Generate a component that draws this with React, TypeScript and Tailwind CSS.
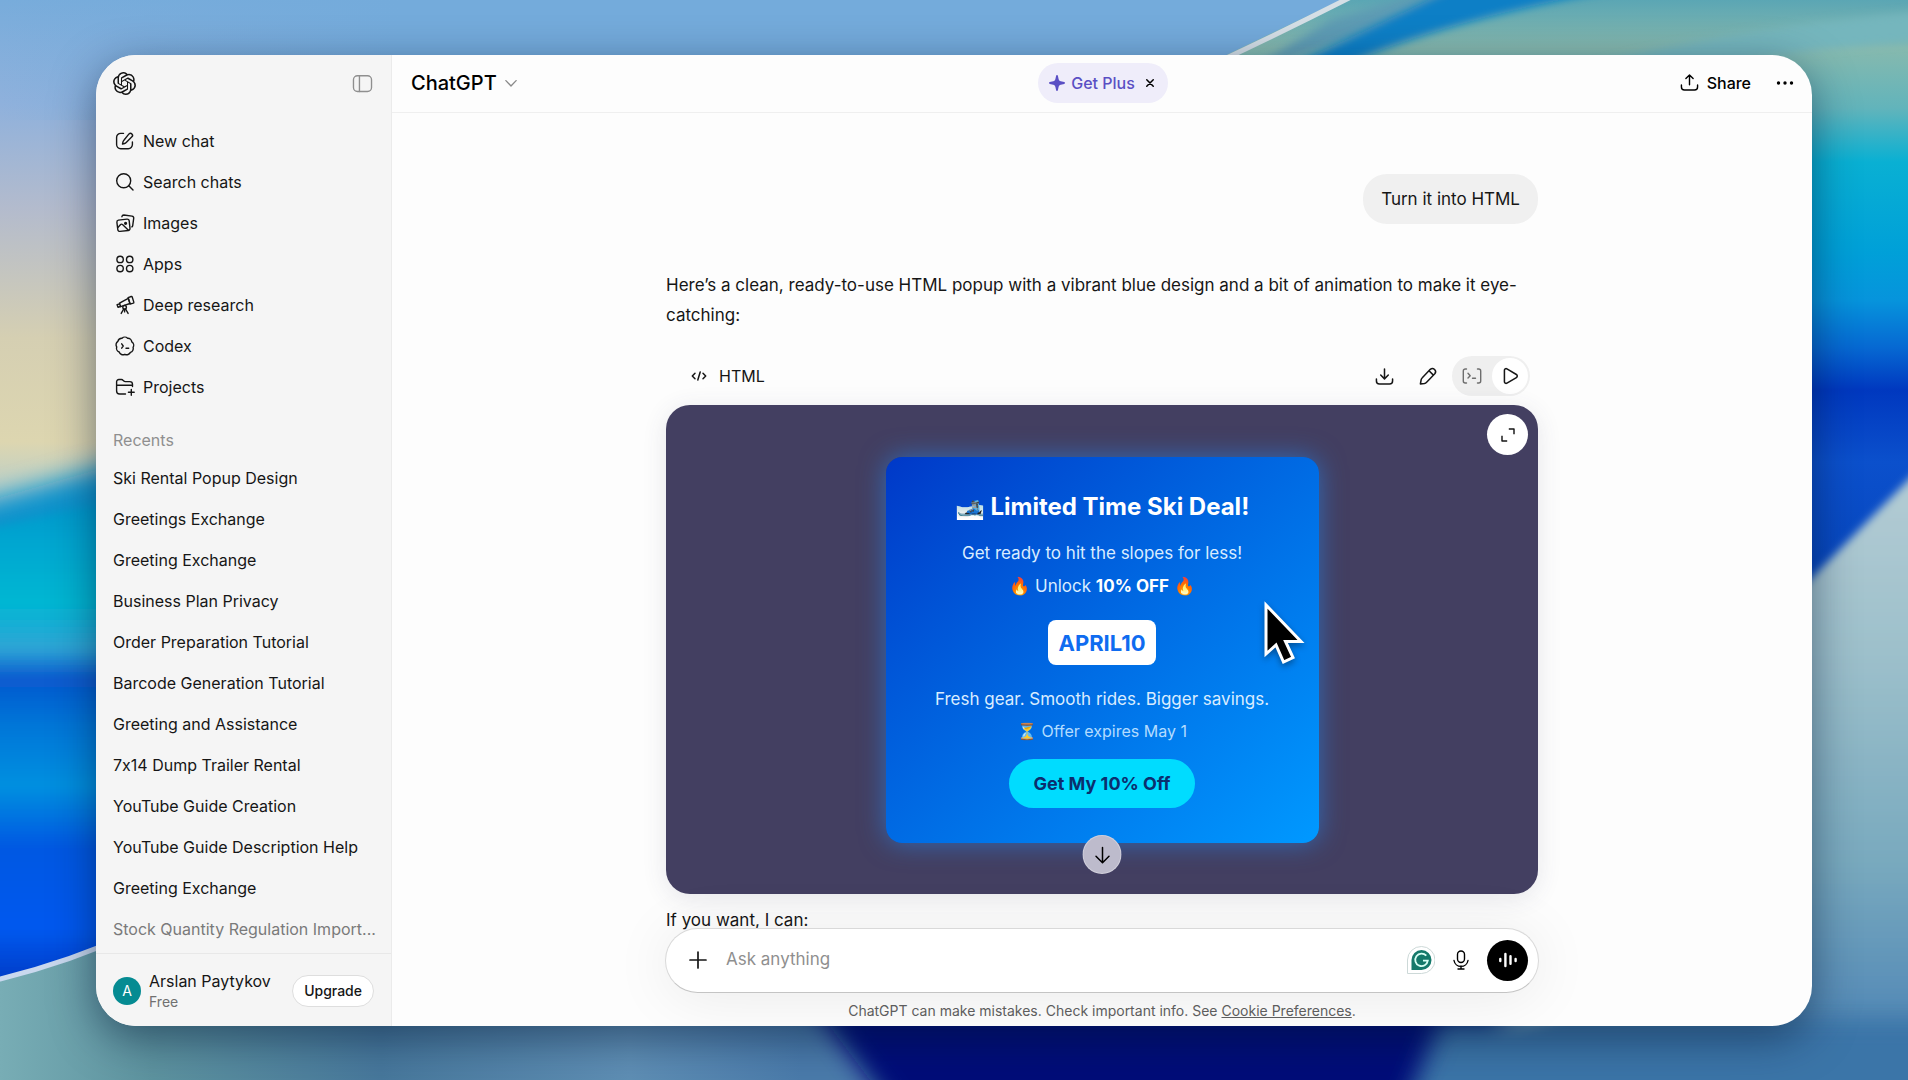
import type { ReactNode } from "react";
import { SiOpenai } from "react-icons/si";

type IconProps = { className?: string; children?: ReactNode; stroke?: string };

function Icon({ className = "size-5", children, stroke = "1.4" }: IconProps) {
  return (
    <svg
      className={className}
      viewBox="0 0 20 20"
      fill="none"
      stroke="currentColor"
      strokeWidth={stroke}
      strokeLinecap="round"
      strokeLinejoin="round"
      aria-hidden="true"
    >
      {children}
    </svg>
  );
}

const navItems: { label: string; icon: ReactNode }[] = [
  {
    label: "New chat",
    icon: (
      <Icon>
        <path d="M8.500 2.400H5.700A4.100 4.100 0 0 0 1.600 6.500v7.100a4.100 4.100 0 0 0 4.100 4.100h7.600a4.100 4.100 0 0 0 4.100-4.100v-2.700" />
        <path d="M14 2.900a2 2 0 0 1 2.900 2.900l-5.700 5.800a3.500 3.500 0 0 1-1.600.9l-2.100.5.500-2.200a3.500 3.500 0 0 1 .9-1.600z" />
      </Icon>
    ),
  },
  {
    label: "Search chats",
    icon: (
      <Icon>
        <circle cx="8.700" cy="8.700" r="7" />
        <path d="m13.800 13.800 4.200 4.200" />
      </Icon>
    ),
  },
  {
    label: "Images",
    icon: (
      <Icon>
        <path d="M3.400 7.100 12 6.100a2 2 0 0 1 2.200 1.800l.8 7.400a2 2 0 0 1-1.800 2.200l-8.200.9a2 2 0 0 1-2.200-1.800l-.9-7.300a2 2 0 0 1 1.500-2.200z" />
        <path d="M6.900 3.700a2 2 0 0 1 2-1.700l8.100 1.100a2 2 0 0 1 1.700 2.200l-1 7.300a2 2 0 0 1-.8 1.300" />
        <path d="m3.100 14.200 2.300-2.500a1.500 1.500 0 0 1 2.100-.1l5.700 5.300" />
        <circle cx="10.600" cy="10.300" r=".9" fill="currentColor" />
      </Icon>
    ),
  },
  {
    label: "Apps",
    icon: (
      <Icon>
        <circle cx="5.100" cy="5.400" r="3.200" />
        <circle cx="14.700" cy="5.400" r="3.200" />
        <circle cx="5.100" cy="14.600" r="3.200" />
        <circle cx="14.700" cy="14.600" r="3.200" />
      </Icon>
    ),
  },
  {
    label: "Deep research",
    icon: (
      <Icon>
        <path d="m13.100 2.600 3.100-1.100a.8.8 0 0 1 1 .5l1.600 5.100a.8.8 0 0 1-.5 1l-3.200 1z" />
        <path d="m13.300 3.300 1.700 5.200-9.400 3.200-1.100-3.500z" />
        <path d="m4.700 8.800-2.600.9.900 2.600 2.400-.8" />
        <circle cx="9.600" cy="12.300" r="1.800" fill="#f5f5f5" />
        <path d="m8.700 14-2.500 4.400M10.600 14l2.500 4.400M9.600 14.300v2.600" />
      </Icon>
    ),
  },
  {
    label: "Codex",
    icon: (
      <Icon>
        <path d="M7 2.300a4 4 0 0 1 5.600-.1 4 4 0 0 1 4.200 3.700 4 4 0 0 1 1.300 5.500 4 4 0 0 1-2.700 5 4 4 0 0 1-5.500 1.900 4 4 0 0 1-5.700-2.300 4 4 0 0 1-2.500-5 4 4 0 0 1 1.200-5.600A4 4 0 0 1 7 2.300z" />
        <path d="m6.700 7.800 1.500 2.200-1.500 2.200M11 12.300h2.700" />
      </Icon>
    ),
  },
  {
    label: "Projects",
    icon: (
      <Icon>
        <path d="M10.500 17H4.600a3 3 0 0 1-3-3V4.700a2.200 2.200 0 0 1 2.200-2.200h2.700c.6 0 1.100.2 1.500.7l.8.8c.4.400.9.600 1.500.600h4.500A2.700 2.700 0 0 1 17.500 7.300v2.200M1.600 8.300h15.900" />
        <path d="M16.300 12.400v5.800M13.400 15.300h5.800" />
      </Icon>
    ),
  },
];

const recents = [
  "Ski Rental Popup Design",
  "Greetings Exchange",
  "Greeting Exchange",
  "Business Plan Privacy",
  "Order Preparation Tutorial",
  "Barcode Generation Tutorial",
  "Greeting and Assistance",
  "7x14 Dump Trailer Rental",
  "YouTube Guide Creation",
  "YouTube Guide Description Help",
  "Greeting Exchange",
  "Stock Quantity Regulation Import...",
];

function Wallpaper() {
  return (
    <svg
      className="absolute inset-0 size-full"
      viewBox="0 0 1908 1080"
      preserveAspectRatio="none"
      aria-hidden="true"
    >
      <defs>
        <linearGradient id="sky" x1="0" y1="0" x2="0" y2="520" gradientUnits="userSpaceOnUse">
          <stop offset="0" stopColor="#78acdb" />
          <stop offset=".2" stopColor="#8fb1dc" />
          <stop offset=".4" stopColor="#b3bbcd" />
          <stop offset=".65" stopColor="#d5cfb2" />
          <stop offset=".85" stopColor="#ddd6b0" />
          <stop offset="1" stopColor="#a5cbd8" />
        </linearGradient>
        <linearGradient id="skyTop" x1="0" y1="0" x2="400" y2="0" gradientUnits="userSpaceOnUse">
          <stop offset="0" stopColor="#74abdb" stopOpacity="0" />
          <stop offset="1" stopColor="#74abdb" />
        </linearGradient>
        <linearGradient id="wave" x1="0" y1="480" x2="0" y2="990" gradientUnits="userSpaceOnUse">
          <stop offset="0" stopColor="#0b8fcb" />
          <stop offset=".12" stopColor="#00a6d0" />
          <stop offset=".24" stopColor="#00b7d3" />
          <stop offset=".33" stopColor="#2fa5d6" />
          <stop offset=".39" stopColor="#0759cf" />
          <stop offset=".48" stopColor="#0576d8" />
          <stop offset=".6" stopColor="#0590e0" />
          <stop offset=".72" stopColor="#0458e2" />
          <stop offset=".88" stopColor="#0059ef" />
          <stop offset="1" stopColor="#0037c0" />
        </linearGradient>
        <linearGradient id="floor" x1="0" y1="0" x2="1908" y2="0" gradientUnits="userSpaceOnUse">
          <stop offset="0" stopColor="#78adb5" />
          <stop offset=".08" stopColor="#5d939f" />
          <stop offset=".2" stopColor="#47789c" />
          <stop offset=".33" stopColor="#5f8fb5" />
          <stop offset=".42" stopColor="#4a7bab" />
        </linearGradient>
        <linearGradient id="right" x1="0" y1="0" x2="0" y2="600" gradientUnits="userSpaceOnUse">
          <stop offset="0" stopColor="#5ba6b4" />
          <stop offset=".08" stopColor="#86b9ae" />
          <stop offset=".18" stopColor="#62b4bb" />
          <stop offset=".27" stopColor="#09b0d3" />
          <stop offset=".42" stopColor="#00a0d8" />
          <stop offset=".5" stopColor="#0694dc" />
          <stop offset=".58" stopColor="#0668d2" />
          <stop offset=".65" stopColor="#0038bf" />
          <stop offset=".77" stopColor="#0b50cc" />
          <stop offset="1" stopColor="#0544bb" />
        </linearGradient>
        <linearGradient id="ice" x1="0" y1="470" x2="0" y2="1080" gradientUnits="userSpaceOnUse">
          <stop offset="0" stopColor="#b4ccd4" />
          <stop offset=".3" stopColor="#9dc0cb" />
          <stop offset=".65" stopColor="#78a9be" />
          <stop offset=".85" stopColor="#5b90b8" />
          <stop offset="1" stopColor="#3e77aa" />
        </linearGradient>
        <filter id="soft4" x="-20%" y="-20%" width="140%" height="140%">
          <feGaussianBlur stdDeviation="4" />
        </filter>
        <filter id="soft12" x="-20%" y="-20%" width="140%" height="140%">
          <feGaussianBlur stdDeviation="12" />
        </filter>
      </defs>
      <rect width="1908" height="1080" fill="url(#sky)" />
      <rect x="0" width="1908" height="120" fill="url(#skyTop)" />
      <path d="M-60 515 200 440V760L-60 760z" fill="#0b93cc" filter="url(#soft12)" />
      <path d="M-60 540 200 480V1010H-60z" fill="url(#wave)" filter="url(#soft4)" />
      <path d="M-40 986 0 979Q70 962 140 930L900 938V1120H-40z" fill="url(#floor)" />
      <path d="M-40 986 0 979Q70 962 140 930" stroke="#c9d8ee" strokeWidth="5" fill="none" />
      <path d="M810 1000H1500V1120H900z" fill="#001179" filter="url(#soft12)" />
      <path d="M1216 60 1351-5H1908V620H1216z" fill="url(#right)" />
      <path d="M1250 70Q1440 10 1640-30L1500-30 1330 20z" fill="#5d9bb4" filter="url(#soft4)" />
      <path d="M1325 75Q1440 15 1700-25H1480Q1400 15 1270 75z" fill="#0a7fc6" filter="url(#soft4)" />
      <path d="M1560 75Q1700 30 1940 10V40Q1760 50 1650 80z" fill="#74b6bd" filter="url(#soft4)" />
      <path d="M1218 62Q1286 30 1351-3" stroke="#d5dfe6" strokeWidth="5" fill="none" />
      <path d="M1780 610 1930 458V1100H1420Q1470 1040 1780 950z" fill="url(#ice)" filter="url(#soft4)" />
      <path d="M1440 1020H1940V1120H1400z" fill="#3a74a8" filter="url(#soft12)" />
    </svg>
  );
}

function Sidebar() {
  return (
    <aside className="flex w-[296px] shrink-0 flex-col border-r border-[#ebebeb] bg-[#f5f5f5]">
      <div className="flex h-[58px] shrink-0 items-center justify-between pr-[18px] pb-0.5 pl-[17px]">
        <a href="#home" aria-label="ChatGPT home">
          <SiOpenai className="size-[23px]" />
        </a>
        <button type="button" aria-label="Close sidebar" className="text-[#8f8f8f]">
          <Icon className="size-[21px]" stroke="1.300">
            <rect x="1.400" y="2.600" width="17.200" height="15" rx="3.800" />
            <path d="M7.100 2.600v15" />
          </Icon>
        </button>
      </div>
      <nav className="mt-[7px] flex flex-col" aria-label="Main">
        {navItems.map((item) => (
          <a key={item.label} href="#nav" className="flex h-[41px] items-center gap-2 pl-[19px]">
            {item.icon}
            {item.label}
          </a>
        ))}
      </nav>
      <h2 className="mt-[15px] flex h-[35px] shrink-0 items-center pl-[17px] text-[#8f8f8f]">Recents</h2>
      <nav className="flex min-h-0 flex-1 flex-col overflow-hidden" aria-label="Recents">
        {recents.map((title, i) => (
          <a
            key={i}
            href="#chat"
            className={`flex h-[41px] shrink-0 items-center pl-[17px] whitespace-nowrap ${
              i === recents.length - 1 ? "text-[#7a7a7a]" : ""
            }`}
          >
            {title}
          </a>
        ))}
      </nav>
      <div className="flex h-[73px] shrink-0 items-center border-t border-[#e8e8e8] pt-0.5 pr-[17px] pl-[17px]">
        <span className="flex size-7 items-center justify-center rounded-full bg-[#058b92] text-sm text-white">
          A
        </span>
        <div className="ml-2 flex-1 whitespace-nowrap">
          <div className="leading-[22px]">Arslan Paytykov</div>
          <div className="text-sm leading-5 text-[#707070]">Free</div>
        </div>
        <button
          type="button"
          className="h-8 rounded-full border border-[#dedede] bg-white px-[11px] text-sm font-medium"
        >
          Upgrade
        </button>
      </div>
    </aside>
  );
}

function Header() {
  return (
    <header className="grid h-[58px] shrink-0 grid-cols-[1fr_auto_1fr] items-center border-b border-[#efefef] pr-[17px] pb-0.5 pl-[19px]">
      <button type="button" className="flex items-center gap-2 justify-self-start text-xl font-medium text-black">
        ChatGPT
        <Icon className="size-3 text-[#8a8a8a]" stroke="2.200">
          <path d="m1.500 6 8.500 9L18.500 6" />
        </Icon>
      </button>
      <div className="flex h-10 items-center rounded-full bg-[#efedfa] px-[11px] text-[#5a4fc4]">
        <button type="button" className="flex items-center gap-1.5 font-medium">
          <svg className="size-4" viewBox="0 0 16 16" fill="currentColor" aria-hidden="true">
            <path d="M8 0c.5 0 .8.300.9.800l.7 3.200c.2 1.200 1 2 2.200 2.300l3.400.8c1 .2 1 1.600 0 1.800l-3.400.8c-1.200.3-2 1.100-2.200 2.300l-.7 3.200c-.2 1-1.600 1-1.800 0L6.400 12c-.2-1.200-1-2-2.200-2.300L.8 8.900c-1-.2-1-1.600 0-1.800l3.400-.8c1.200-.3 2-1.100 2.200-2.300L7.100.8C7.200.3 7.500 0 8 0z" />
          </svg>
          Get Plus
        </button>
        <button type="button" aria-label="Dismiss" className="ml-2 p-0.5 text-black">
          <Icon className="size-2.5" stroke="3">
            <path d="M3.500 3.500 16.500 16.500M16.500 3.500 3.500 16.500" />
          </Icon>
        </button>
      </div>
      <div className="flex items-center gap-6 justify-self-end text-black">
        <button type="button" className="flex items-center gap-2 font-medium">
          <Icon className="size-[19px]" stroke="1.500">
            <path d="M1.500 12.700v2a3.200 3.200 0 0 0 3.200 3.200h10.600a3.200 3.200 0 0 0 3.200-3.200v-2M10 12.300V2M6.200 5.800 10 2l3.800 3.800" />
          </Icon>
          Share
        </button>
        <button type="button" aria-label="More">
          <svg className="size-5" viewBox="0 0 20 20" fill="currentColor" aria-hidden="true">
            <circle cx="3.500" cy="10" r="1.700" />
            <circle cx="10" cy="10" r="1.700" />
            <circle cx="16.500" cy="10" r="1.700" />
          </svg>
        </button>
      </div>
    </header>
  );
}

function CodeToolbar() {
  return (
    <div className="flex h-10 items-center pr-2 pl-[25px]">
      <svg className="mr-3 h-3 w-4" viewBox="0 0 16 12" fill="none" stroke="currentColor" strokeWidth="1.500" strokeLinecap="round" strokeLinejoin="round" aria-hidden="true">
        <path d="M4 3.200 1.300 6 4 8.800M12 3.200 14.700 6 12 8.800M9.200 2 6.800 10" />
      </svg>
      <span className="flex-1">HTML</span>
      <button type="button" aria-label="Download" className="mr-6">
        <Icon className="size-[19px]" stroke="1.600">
          <path d="M1.500 12.700v2a3.200 3.200 0 0 0 3.200 3.200h10.600a3.200 3.200 0 0 0 3.200-3.200v-2M10 2v10.200M6 8.500l4 4 4-4" />
        </Icon>
      </button>
      <button type="button" aria-label="Edit" className="mr-3.5">
        <Icon stroke="1.500">
          <path d="M12.300 3.300a3.200 3.200 0 0 1 4.500 4.500l-8.200 8.400a4.300 4.300 0 0 1-2.200 1.200l-4 .6.700-4a4.300 4.300 0 0 1 1.200-2.300zM11 4.700l4.400 4.400" />
        </Icon>
      </button>
      <div className="flex h-10 w-[78px] items-center justify-between rounded-full bg-[#efefef] pr-0.5 pl-2.5">
        <button type="button" aria-label="Show code" className="text-[#6e6e6e]">
          <Icon>
            <path d="M4.500 3H3.300a2 2 0 0 0-2 2v10a2 2 0 0 0 2 2h1.200M15.500 3h1.200a2 2 0 0 1 2 2v10a2 2 0 0 1-2 2h-1.200M6 7.300 8.200 9.800 6 12M10.500 12.300h3" />
          </Icon>
        </button>
        <button type="button" aria-label="Run preview" className="flex size-9 items-center justify-center rounded-full bg-white">
          <Icon className="size-[18px]" stroke="1.700">
            <path d="M3.800 3.700c0-1.500 1.500-2.300 2.800-1.600l10.500 6.200c1.300.800 1.300 2.600 0 3.400L6.600 17.900c-1.300.7-2.800-.1-2.800-1.600z" />
          </Icon>
        </button>
      </div>
    </div>
  );
}

function Preview() {
  return (
    <section className="relative mt-[9px] flex h-[489px] items-start justify-center rounded-3xl bg-[#433f61] pt-[52px] shadow-[0_4px_24px_rgba(67,63,97,0.12)]">
      <button
        type="button"
        aria-label="Expand"
        className="absolute top-[9px] right-2.5 flex size-[41px] items-center justify-center rounded-full bg-white"
      >
        <Icon className="size-4" stroke="1.800">
          <path d="M11 2.500h6.500V9M2.500 11v6.500H9" strokeLinecap="butt" />
        </Icon>
      </button>
      <div className="flex h-[386px] w-[433px] flex-col items-center rounded-2xl bg-linear-to-br from-[#0038c8] to-[#0099ff] pt-8 text-[17px] text-[#d9ecff] shadow-[0_0_26px_rgba(40,130,230,0.65)]">
        <h3 className="flex h-9 items-center text-2xl font-bold text-white">🎿 Limited Time Ski Deal!</h3>
        <p className="mt-3 flex h-8 items-center">Get ready to hit the slopes for less!</p>
        <p className="flex h-[34px] items-center">
          <span>
            🔥 Unlock <strong className="text-white">10% OFF</strong> 🔥
          </span>
        </p>
        <div className="mt-[17px] flex h-[45px] items-center rounded-lg bg-white px-2.5 text-[22px] font-bold text-[#0f6cf0]">
          APRIL10
        </div>
        <p className="mt-[18px] flex h-8 items-center">Fresh gear. Smooth rides. Bigger savings.</p>
        <p className="flex h-8 items-center text-base text-[#b3dcff]">⏳ Offer expires May 1</p>
        <button type="button" className="mt-3 h-[49px] rounded-full bg-[#00dcff] px-6 text-lg font-bold text-[#0b2f6e]">
          Get My 10% Off
        </button>
      </div>
      <svg
        className="absolute top-[195px] left-[596px] h-[70px] w-[44px] drop-shadow-[0_3px_3px_rgba(0,0,0,0.35)]"
        viewBox="0 0 44 70"
        aria-hidden="true"
      >
        <path d="M4 5v49L14 45l7.500 17 9.500-4.500L23.500 41.500H39z" fill="#000" stroke="#fff" strokeWidth="3" />
      </svg>
    </section>
  );
}

function Composer() {
  return (
    <footer className="relative z-10 px-6">
      <button
        type="button"
        aria-label="Scroll to bottom"
        className="absolute -top-[93px] left-1/2 flex size-[39px] -translate-x-1/2 items-center justify-center rounded-full border border-white/30 bg-[#bdbbcc] text-black"
      >
        <Icon stroke="1.500">
          <path d="M10 2.500v15M3.500 11.200l6.500 6.500 6.500-6.500" />
        </Icon>
      </button>
      <form className="mx-auto flex h-[65px] max-w-[874px] items-center rounded-full border border-[#d9d9d9] border-b-[#c4c4c4] bg-white pr-2.5 pb-px pl-[22px] shadow-[0_4px_60px_rgba(0,0,0,0.08)]">
        <button type="button" aria-label="Add files">
          <Icon stroke="1.700">
            <path d="M10 2v16M2 10h16" />
          </Icon>
        </button>
        <input
          type="text"
          aria-label="Message"
          placeholder="Ask anything"
          className="ml-[18px] min-w-0 flex-1 bg-transparent text-[17px] outline-none placeholder:text-[#8f8f8f]"
        />
        <button type="button" aria-label="Grammarly">
          <svg className="size-7" viewBox="0 0 28 28" aria-hidden="true">
            <path d="M14.500.5a13.500 13.500 0 1 1 0 27H.5v-13.500A13.700 13.700 0 0 1 14.500.5z" fill="#fff" stroke="#cdd9d8" />
            <path d="M14.500 4a10 10 0 1 1 0 20H4.500V14a10 10 0 0 1 10-10z" fill="#14796a" />
            <path d="M19.300 9.700a6.300 6.300 0 1 0 1.500 5H16" fill="none" stroke="#d8fff4" strokeWidth="1.800" />
          </svg>
        </button>
        <button type="button" aria-label="Dictate" className="mx-4 text-black">
          <Icon>
            <rect x="6.500" y="1" width="7" height="11.500" rx="3.500" />
            <path d="M3 10.500a7.100 7.100 0 0 0 14 0M10 16v3M7 19h6" />
          </Icon>
        </button>
        <button type="button" aria-label="Voice mode" className="flex size-[41px] items-center justify-center rounded-full bg-black text-white">
          <Icon stroke="2.400">
            <path d="M2.300 9v2M7.400 4v12M12.500 6.300v7.400M17.600 9v2" />
          </Icon>
        </button>
      </form>
      <p className="flex h-[33px] items-center justify-center pt-0.5 text-sm text-[#5d5d5d]">
        <span>
          ChatGPT can make mistakes. Check important info. See{" "}
          <a href="#cookies" className="underline">
            Cookie Preferences
          </a>
          .
        </span>
      </p>
    </footer>
  );
}

export default function App() {
  return (
    <div className="relative h-screen overflow-hidden px-24 pt-[55px] pb-[54px] font-['Inter',sans-serif] text-base text-[#161616] [font-feature-settings:'calt'_0]">
      <Wallpaper />
      <div className="relative flex h-full overflow-hidden rounded-[40px] bg-[#fdfdfd] shadow-[0_12px_44px_rgba(0,20,50,0.5)]">
        <Sidebar />
        <div className="flex min-w-0 flex-1 flex-col">
          <Header />
          <main className="min-h-0 flex-1 px-6">
            <div className="mx-auto flex max-w-[872px] flex-col text-[17px] leading-[30px]">
              <div className="mt-[61px] self-end rounded-3xl bg-[#f0f0f0] px-[18px] py-2.5">Turn it into HTML</div>
              <p className="mt-[46px]">
                Here’s a clean, ready-to-use HTML popup with a vibrant blue design and a bit of animation to make it
                eye-catching:
              </p>
              <div className="mt-[26px] text-base">
                <CodeToolbar />
              </div>
              <Preview />
              <p className="mt-[11px]">If you want, I can:</p>
            </div>
          </main>
          <Composer />
        </div>
      </div>
    </div>
  );
}
